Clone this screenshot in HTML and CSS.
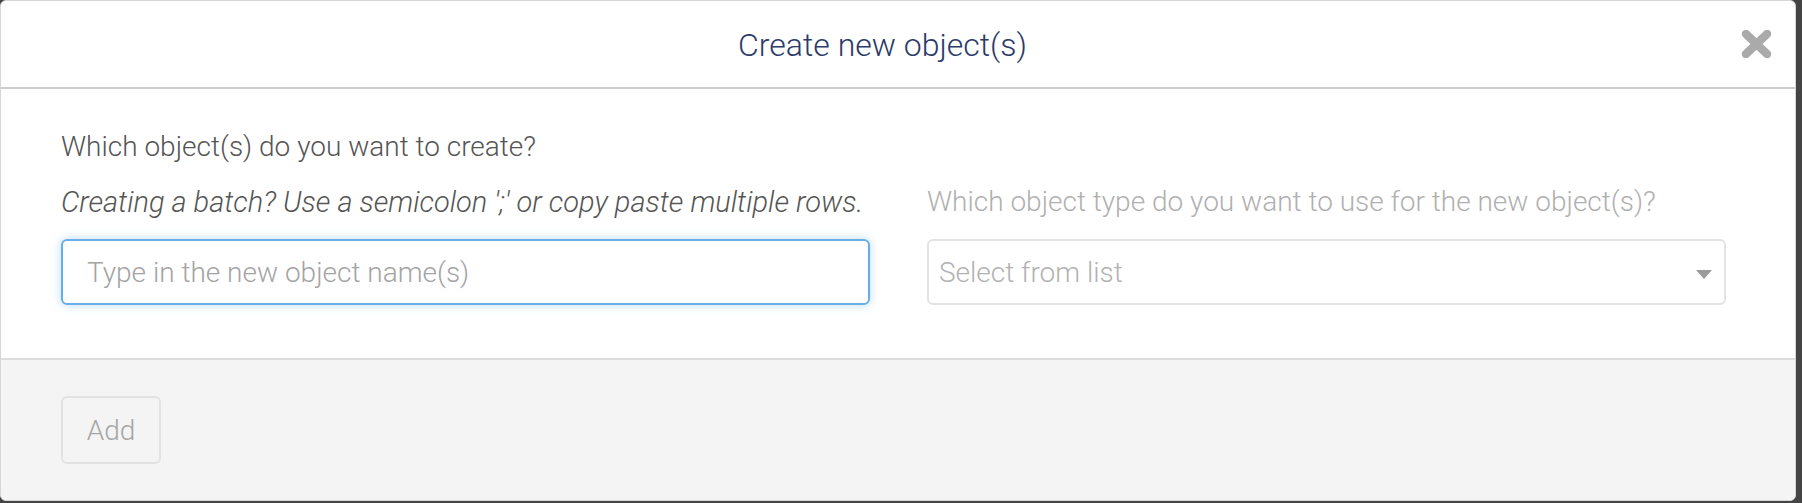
FILE: index.html
```html
<!DOCTYPE html>
<html>
<head>
<meta charset="utf-8">
<link rel="stylesheet" href="styles.css">
</head>
<body>
<div class="modal">
  <div class="modal-header">
    <h4 class="modal-title">Create new object(s)</h4>
    <button class="close" aria-label="Close">
      <svg width="31" height="28" viewBox="0 0 31 28"><path d="M5 4 L26 24 M26 4 L5 24" stroke="#aaaaaa" stroke-width="8.5" stroke-linecap="round"/></svg>
    </button>
  </div>
  <div class="modal-body">
    <div class="grid">
      <div class="label">Which object(s) do you want to create?</div>
      <div></div>
      <div class="hint">Creating a batch? Use a semicolon ';' or copy paste multiple rows.</div>
      <div class="label muted">Which object type do you want to use for the new object(s)?</div>
      <div class="input focused"><span class="placeholder">Type in the new object name(s)</span></div>
      <div class="select"><span class="placeholder">Select from list</span><span class="caret"></span></div>
    </div>
  </div>
  <div class="modal-footer">
    <button class="btn">Add</button>
  </div>
</div>
</body>
</html>
```
FILE: styles.css
```css
html, body { margin: 0; padding: 0; }
body {
  background: #444444;
  width: 1802px;
  height: 503px;
  font-family: Roboto, "Noto Sans", sans-serif;
  font-weight: 300;
}
.modal {
  width: 1794px;
  height: 499px;
  background: #ffffff;
  border: 1px solid #d6d6d6;
  border-radius: 6px;
  overflow: hidden;
  display: flex;
  flex-direction: column;
}
.modal-header {
  flex-shrink: 0;
  height: 86px;
  border-bottom: 2px solid #cbcbcb;
  display: flex;
  align-items: center;
  padding: 0 23px;
}
.modal-title {
  flex: 1;
  margin: 0;
  text-align: center;
  font-size: 32px;
  font-weight: 300;
  color: #2c3b69;
  line-height: 38px;
  padding-top: 2px;
}
.close {
  border: 0;
  background: none;
  padding: 0;
  width: 31px;
  height: 28px;
  display: flex;
}
.modal-body {
  flex-shrink: 0;
  padding: 39px 70px 53px 60px;
  border-bottom: 2px solid #dddddd;
}
.grid {
  display: grid;
  grid-template-columns: 809px 799px;
  column-gap: 57px;
}
.label, .hint {
  font-size: 28px;
  line-height: 38px;
  color: #555555;
}
.label { margin-bottom: 17px; }
.hint { font-style: italic; font-size: 29px; margin-bottom: 18px; }
.muted { color: #b0b0b0; }
.input, .select {
  height: 62px;
  border-radius: 6px;
  display: flex;
  align-items: center;
  font-size: 28px;
  box-sizing: content-box;
}
.input {
  border: 2px solid #66aee6;
  box-shadow: 0 0 10px rgba(102, 175, 233, 0.45);
  padding: 0 24px;
}
.select {
  border: 2px solid #e3e3e3;
  padding: 0 12px 0 10px;
  justify-content: space-between;
}
.placeholder { color: #a4a4a4; }
.select .placeholder { color: #b2b2b2; }
.caret {
  width: 0;
  height: 0;
  border-left: 8px solid transparent;
  border-right: 8px solid transparent;
  border-top: 9px solid #9a9a9a;
  margin-right: 0;
  margin-top: 4px;
}
.modal-footer {
  flex: 1;
  background: #f4f4f4;
  padding: 36px 60px 0;
}
.btn {
  width: 100px;
  height: 68px;
  border: 2px solid #e2e2e2;
  border-radius: 6px;
  background: #f4f4f4;
  font-family: Roboto, "Noto Sans", sans-serif;
  font-weight: 300;
  font-size: 28px;
  color: #a6a6a6;
  padding: 0;
}
```
